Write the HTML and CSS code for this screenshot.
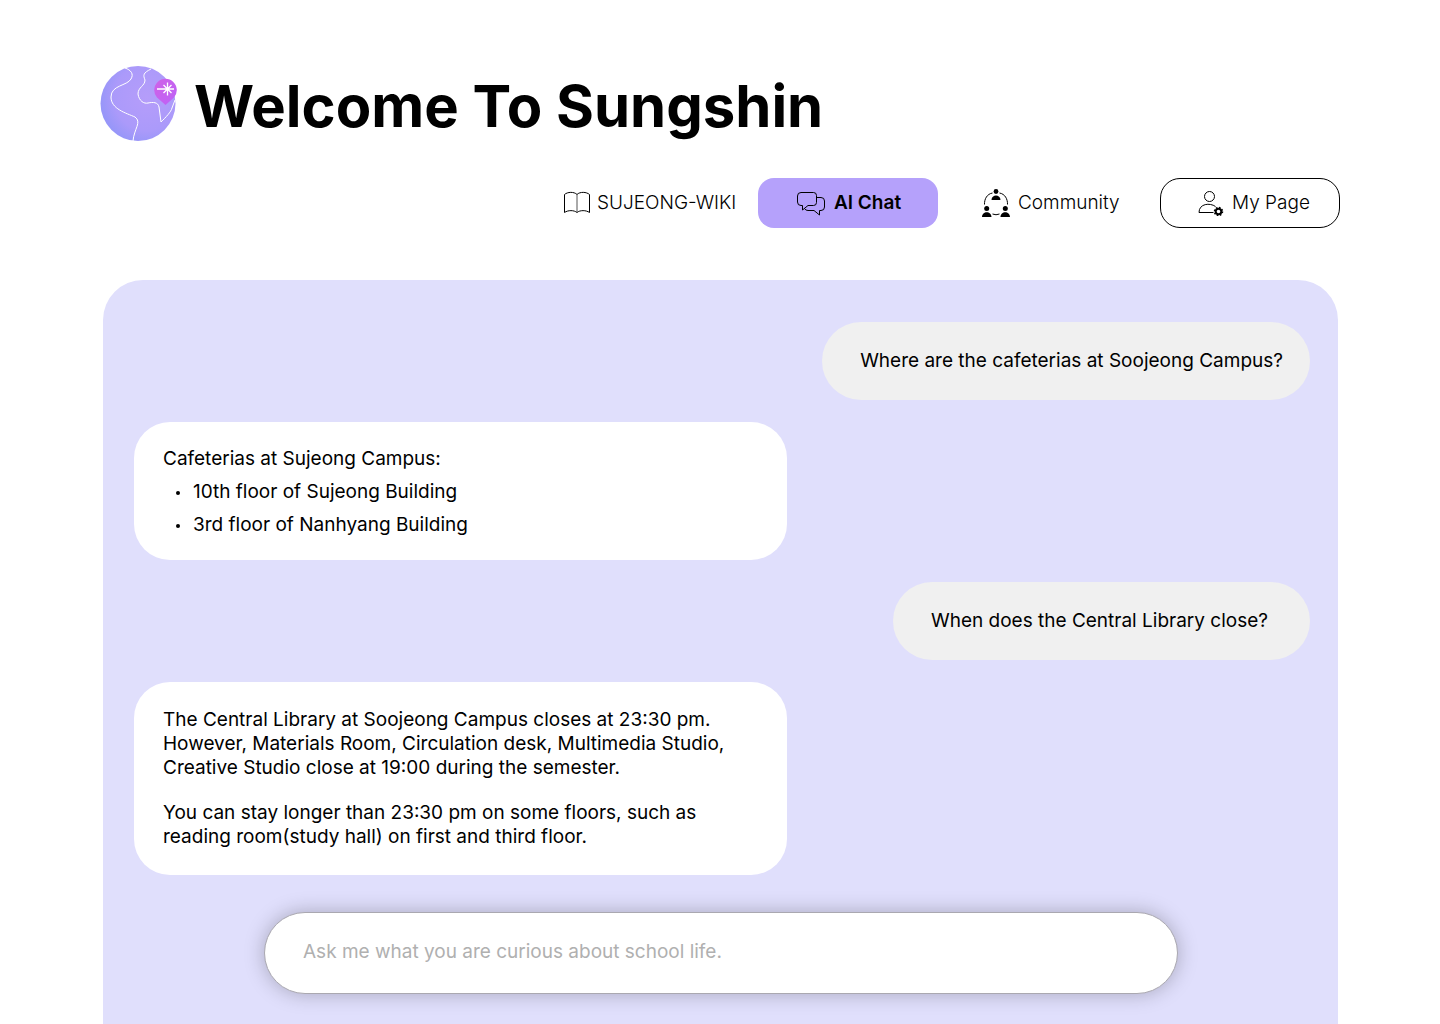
FILE: index.html
```html
<!DOCTYPE html>
<html lang="en">
<head>
<meta charset="utf-8">
<meta name="viewport" content="width=device-width, initial-scale=1">
<title>Welcome To Sungshin</title>
<link rel="stylesheet" href="styles.css">
</head>
<body>
<header class="header">
  <div class="brand">
    <svg class="logo" viewBox="0 0 78 76" width="78" height="76" aria-hidden="true">
      <defs>
        <radialGradient id="globe" cx=".62" cy=".42" r=".68"><stop offset="0" stop-color="#b59dfa"/><stop offset=".65" stop-color="#ab9afa"/><stop offset="1" stop-color="#9195f8"/></radialGradient>
        <linearGradient id="pin" x1="0" y1="0" x2="1" y2="1"><stop offset="0" stop-color="#cf62e6"/><stop offset="1" stop-color="#bd62f8"/></linearGradient>
      </defs>
      <circle cx="38" cy="37.500" r="37.500" fill="url(#globe)"/>
      <path d="M25 2C31 4 34 8 31 13C27 20 11 19 11 31C11 43 26 47 35 51C42 56 34 63 33 75M51 3C43 7 43 9 45 14C45 20 38 21 38 28C39 35 44 38 48 37C53 36 58 36 59 41L61 56C66 51 71 46 72 42L75 34" fill="none" stroke="#fff" stroke-width="1"/>
      <path d="M65.500 39L57 31.500A11.300 11.300 0 1 1 74 31.500Z" fill="url(#pin)"/>
      <path d="M57 23H74M67.500 16.500V29.500M63.500 19L71.500 27M71.500 19L63.500 27" stroke="#fff" stroke-width="1.300" fill="none"/>
    </svg>
    <h1 class="title">Welcome To Sungshin</h1>
  </div>
  <nav class="nav" aria-label="Main">
    <a class="nav-item wiki" href="#wiki">
      <svg viewBox="0 0 28 24" width="28" height="24" fill="none" stroke="#000" stroke-width="1" aria-hidden="true"><path d="M14 3.500C11 .5 4.500.8 1.500 3.500V21.500C5 19 11 19 14 21.500C17 19 23 19 26.500 21.500V3.500C23.500.8 17 .5 14 3.500Z"/><path d="M14 3.500V21.500" stroke="#555"/></svg>
      SUJEONG-WIKI</a>
    <a class="nav-item active" href="#chat" aria-current="page">
      <svg viewBox="0 0 30 26" width="30" height="26" fill="none" stroke="#000" stroke-width="1" aria-hidden="true"><path d="M5 2.500H17.500Q20.500 2.500 20.500 5.500V12.500Q20.500 15.500 17.500 15.500H12L6.500 20V15.500H5Q1.500 15.500 1.500 12V6Q1.500 2.500 5 2.500Z"/><path d="M20.500 7.500H25Q28.500 7.500 28.500 11V17Q28.500 20.500 25 20.500H23.500V25L18 20.500H12Q9.500 20.500 8.500 18.500"/></svg>
      AI Chat</a>
    <a class="nav-item community" href="#community">
      <svg viewBox="0 0 28 28" width="28" height="28" aria-hidden="true"><circle cx="14" cy="2.500" r="2.400"/><path d="M9.500 11C9.500 5 18.500 5 18.500 11ZM0 28C0 21.500 9.500 21.500 9.500 28ZM18.500 28C18.500 21.500 28 21.500 28 28Z"/><circle cx="4.700" cy="19.500" r="2.500"/><circle cx="23.300" cy="19.500" r="2.500"/><path d="M10.500 4C5 5 2.300 10 2.500 15.500M17.500 4C23 5 25.700 10 25.500 15.500M10.500 25Q14 26.500 17.500 25" fill="none" stroke="#000"/></svg>
      Community</a>
    <a class="nav-item mypage" href="#mypage">
      <svg viewBox="0 0 26 26" width="26" height="26" fill="none" stroke="#000" stroke-width="1" aria-hidden="true"><circle cx="11.500" cy="6.500" r="5"/><path d="M15.500 22.500H1C1 13.500 12 12.500 17.500 16.500"/><circle cx="20.500" cy="21.500" r="2.800" stroke-width="2"/><circle cx="20.500" cy="21.500" r="4" stroke-width="1.500" stroke-dasharray="1.600 1.540"/></svg>
      My Page</a>
  </nav>
</header>
<main class="chat">
  <p class="bubble question">Where are the cafeterias at Soojeong Campus?</p>
  <div class="bubble answer places">
    <p>Cafeterias at Sujeong Campus:</p>
    <ul>
      <li>10th floor of Sujeong Building</li>
      <li>3rd floor of Nanhyang Building</li>
    </ul>
  </div>
  <p class="bubble question short">When does the Central Library close?</p>
  <div class="bubble answer hours">
    <p>The Central Library at Soojeong Campus closes at 23:30 pm. However, Materials Room, Circulation desk, Multimedia Studio, Creative Studio close at 19:00 during the semester.</p>
    <p>You can stay longer than 23:30 pm on some floors, such as reading room(study hall) on first and third floor.</p>
  </div>
  <form class="ask">
    <input class="ask-input" type="text" aria-label="Ask a question" placeholder="Ask me what you are curious about school life.">
  </form>
</main>
</body>
</html>
```
FILE: styles.css
```css
* { box-sizing: border-box; }
body {
  margin: 0;
  min-height: 100vh;
  display: flex;
  flex-direction: column;
  background: #fff;
  color: #000;
  font: 400 19px/24px Inter, sans-serif;
}
p, ul, h1 { margin: 0; }
.header { padding: 66px 100px 52px; }
.brand { display: flex; align-items: center; gap: 16px; height: 76px; }
.logo { flex: none; }
.title { font-size: 58px; line-height: 76px; font-weight: 700; white-space: nowrap; padding-top: 4px; }
.nav { display: flex; justify-content: flex-end; gap: 20px; margin-top: 36px; }
.nav-item {
  display: flex;
  align-items: center;
  width: 180px;
  height: 50px;
  color: #000;
  font-weight: 300;
  text-decoration: none;
  white-space: nowrap;
}
.nav-item svg { flex: none; }
.wiki { padding-left: 5px; gap: 6px; }
.active { padding-left: 38px; gap: 8px; background: #b5a1fb; border-radius: 16px; font-weight: 600; }
.community { width: 182px; padding-left: 24px; gap: 8px; }
.mypage { padding-left: 37px; gap: 8px; border: 1px solid #000; border-radius: 20px; }
.chat {
  flex: 1 0 auto;
  display: flex;
  flex-direction: column;
  gap: 22px;
  margin: 0 102px 0 103px;
  padding: 42px 28px 30px 31px;
  background: #e0dffc;
  border-radius: 40px 40px 0 0;
  overflow: hidden;
}
.question {
  align-self: flex-end;
  padding: 27px 27px 27px 38px;
  background: #f0f0f0;
  border-radius: 39px;
}
.short { padding-right: 42px; }
.answer {
  width: 100%;
  max-width: 653px;
  background: #fff;
  border-radius: 36px;
}
.places { padding: 20px 29px 19px; line-height: 33px; }
.places ul { padding-left: 30px; list-style: none; }
.places li { display: flex; align-items: center; }
.places li::before {
  content: "";
  width: 4px;
  height: 4px;
  margin: 2px 13px 0 -17px;
  border-radius: 50%;
  background: #000;
}
.hours { display: grid; gap: 21px; padding: 26px 48px 26px 29px; }
.ask { display: flex; justify-content: center; padding: 15px 2px 0 0; }
.ask-input {
  width: 914px;
  max-width: 100%;
  height: 82px;
  padding: 0 38px 4px;
  border: 1px solid #aaa8b0;
  border-radius: 41px;
  background: #fff;
  box-shadow: 0 0 20px rgba(0, 0, 0, .25);
  color: #000;
  font: inherit;
}
.ask-input::placeholder { color: #b0b0b0; opacity: 1; }
```
